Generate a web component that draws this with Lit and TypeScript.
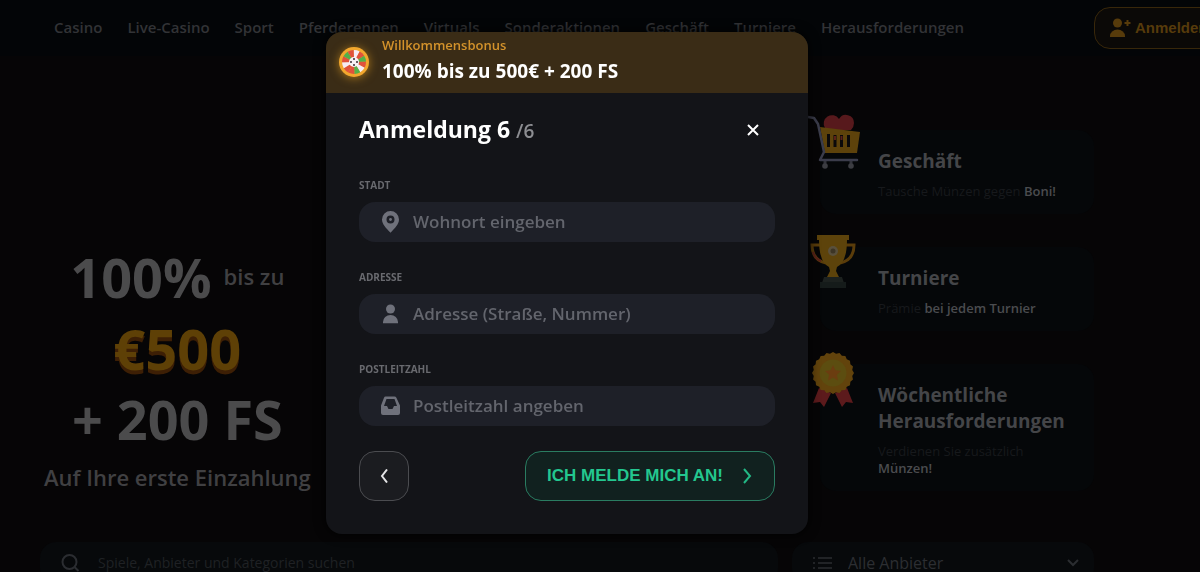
import { LitElement, html, css, svg } from "lit";
import { customElement } from "lit/decorators.js";

const NAV = ["Casino", "Live-Casino", "Sport", "Pferderennen", "Virtuals", "Sonderaktionen", "Geschäft", "Turniere", "Herausforderungen"];

const cart = html`<svg width="54" height="58" viewBox="2 5 54 58" overflow="visible" aria-hidden="true">
  <path d="M17 16a8 8 0 0 1 14-9 8 8 0 0 1 15 4q0 4-3 7H19z" fill="#57191c"/>
  <path d="M12 15l40 5-3 21H17z" fill="#5d420b"/>
  <path d="M20.500 22v13M27 23v12M33.500 23v12M40.500 23v12" stroke="#0b090a" stroke-width="3"/>
  <path d="M27 24v4M33.500 24v4" stroke="#5a201a" stroke-width="2"/>
  <path d="M0 5l6 1 4 6 6 28-4 8h37" fill="none" stroke="#3b3c4b" stroke-width="2.500" stroke-linecap="round" stroke-linejoin="round"/>
  <path d="M17 49v4M43 49v4" stroke="#33343c" stroke-width="3"/>
  <circle cx="17" cy="54" r="2.800" fill="#3c3d42"/><circle cx="43" cy="54" r="2.800" fill="#3c3d42"/>
</svg>`;

const cup = html`<svg width="46" height="56" viewBox="0 0 46 56" aria-hidden="true">
  <path d="M10 11H2q0 15 14 18M36 11h8q0 15-14 18" fill="none" stroke="#5a3c0a" stroke-width="3"/>
  <path d="M3 18q2 7 8 9" fill="none" stroke="#5a201a" stroke-width="2"/>
  <path d="M7 1h32v5h-2q0 22-10 27l-1 4 3 6H17l3-6-1-4Q9 28 9 6H7z" fill="#5d430b"/>
  <circle cx="23" cy="17" r="5" fill="#59503c"/><circle cx="23" cy="17" r="2.500" fill="#3d3525"/>
  <path d="M14 43h18l2 6H12z" fill="#1c211f"/><path d="M10 48h26v6H10z" fill="#151b1a"/>
</svg>`;

const points = Array.from({ length: 40 }, (_, i) => {
  const r = i % 2 ? 19.5 : 21;
  const a = (i * Math.PI) / 20;
  return `${(22 + r * Math.cos(a)).toFixed(2)},${(21 + r * Math.sin(a)).toFixed(2)}`;
}).join(" ");

const rosette = html`<svg width="44" height="56" viewBox="-1 -1 44 56" aria-hidden="true">
  <path d="M8 36L2 51l7-1 4 5 7-14zM36 36l6 15-7-1-4 5-7-14z" fill="#5c1a1c"/>
  <polygon points=${points} fill="#62430c"/>
  <circle cx="22" cy="21" r="13.500" fill="#5c4d10"/>
  <path d="M22 13l2.400 5.200 5.600.7-4.100 3.900 1.100 5.600-5-2.800-5 2.800 1.100-5.600-4.100-3.900 5.600-.7z" fill="#6b3d10"/>
</svg>`;

const wheelColors = ["#f6ecf5", "#e0523c", "#53b04a", "#e0523c", "#f6ecf5", "#53b04a", "#e0523c", "#e0523c", "#f6ecf5", "#e0523c", "#53b04a", "#e0523c"];
const wheel = html`<svg class="wheel" width="32" height="32" viewBox="0 0 32 32" aria-hidden="true">
  <circle cx="16" cy="15" r="15" fill="#f2a72e"/>
  ${wheelColors.map((c, i) => {
    const p = (a: number) => `${(16 + 12 * Math.cos(a)).toFixed(2)} ${(15 + 12 * Math.sin(a)).toFixed(2)}`;
    const s = (i * Math.PI) / 6 - 1.6;
    return svg`<path d="M16 15L${p(s)}A12 12 0 0 1 ${p(s + Math.PI / 6)}z" fill=${c}/>`;
  })}
  <circle cx="16" cy="15" r="5" fill="#f7f1f4"/>
  <path d="M16 11v2M16 17v2M12 15h2M18 15h2" stroke="#3b2c33" stroke-width="1.500"/>
</svg>`;

const pin = html`<svg width="20" height="22" viewBox="0 0 20 22" aria-hidden="true"><path fill="currentColor" fill-rule="evenodd" d="M10.500 0a8.500 8.500 0 0 0-8.500 8.500C2 13 6 17 10.500 21.800 15 17 19 13 19 8.500A8.500 8.500 0 0 0 10.500 0zm0 4.500a4 4 0 1 1 0 8 4 4 0 0 1 0-8z"/><circle cx="10.500" cy="8.500" r="1.400" fill="currentColor"/></svg>`;
const person = html`<svg width="20" height="20" viewBox="0 0 20 20" aria-hidden="true"><circle cx="10.500" cy="5" r="4.500" fill="currentColor"/><path d="M3 19.200v-1.200a7 6.500 0 0 1 15 0v1.200z" fill="currentColor"/></svg>`;
const inbox = html`<svg width="20" height="20" viewBox="0 0 20 20" aria-hidden="true"><path fill="currentColor" fill-rule="evenodd" d="M5.500.5h9q1.300 0 1.900 1.300L20 9.500V17q0 2-2 2H3q-2 0-2-2V9.500l3-7.700Q4.500.5 5.500.5zM6.500 3L4 10h3l1.500 3h4L14 10h3l-2.500-7z"/></svg>`;

const FIELDS = [
  { id: "city", label: "STADT", hint: "Wohnort eingeben", icon: pin },
  { id: "address", label: "ADRESSE", hint: "Adresse (Straße, Nummer)", icon: person },
  { id: "zip", label: "POSTLEITZAHL", hint: "Postleitzahl angeben", icon: inbox },
];

@customElement("signup-dialog")
class SignupDialog extends LitElement {
  static styles = css`
    :host { display: block; width: 100%; max-width: 482px; }
    * { box-sizing: border-box; }
    .dialog { border-radius: 16px; overflow: hidden; background: #131418; color: #fff; box-shadow: 0 0 12px #000; }
    .offer { display: flex; align-items: center; gap: 12px; min-height: 61px; padding: 0 12px; background: #3a2c16; }
    .wheel { flex: none; filter: drop-shadow(0 1px 5px #a8761d); }
    .offer-text { display: grid; gap: 5px; padding-bottom: 3px; }
    .offer-name { font-size: 13px; line-height: 14px; font-weight: 600; color: #d3922b; }
    .offer-value { font-size: 19px; line-height: 28px; font-weight: 700; }
    .body { padding: 20px 33px 33px; }
    .head { display: flex; align-items: center; justify-content: space-between; margin-bottom: 31px; }
    h2 { margin: 0; font-size: 23px; line-height: 32px; font-weight: 700; }
    .total { font-size: 19px; font-weight: 600; color: #8c8d91; }
    button { font: inherit; color: inherit; cursor: pointer; }
    .close { display: grid; place-items: center; width: 44px; height: 32px; padding: 0; border: 0; background: none; }
    .fields { display: grid; gap: 28px; }
    .row { display: grid; gap: 10px; }
    label { font-size: 10px; line-height: 14px; font-weight: 700; color: #696a6f; }
    .field { display: flex; align-items: center; gap: 13px; height: 40px; padding: 0 21px; border-radius: 16px; background: #1e2028; color: #6f717b; }
    .field svg { flex: none; }
    input { flex: 1; min-width: 0; padding: 0; border: 0; outline: 0; background: none; color: #fff; font: 600 17px/24px "Open Sans", sans-serif; }
    input::placeholder { color: #63656d; opacity: 1; }
    .actions { display: flex; justify-content: space-between; margin-top: 25px; }
    .back, .submit { display: flex; align-items: center; height: 50px; border-radius: 16px; }
    .back { justify-content: center; width: 50px; padding: 0; border: 1px solid #4b4c50; background: #1b1c20; }
    .submit { gap: 20px; padding: 0 22px 0 21px; border: 1px solid #2a7c61; background: #11211f; color: #23c78f; font: 700 17px/24px "Liberation Sans", sans-serif; white-space: nowrap; }
  `;

  render() {
    return html`<section class="dialog" role="dialog" aria-modal="true" aria-labelledby="title">
      <div class="offer">
        ${wheel}
        <div class="offer-text">
          <span class="offer-name">Willkommensbonus</span>
          <span class="offer-value">100% bis zu 500€ + 200 FS</span>
        </div>
      </div>
      <form class="body" @submit=${(e: Event) => e.preventDefault()}>
        <div class="head">
          <h2 id="title">Anmeldung 6 <span class="total">/6</span></h2>
          <button class="close" type="button" aria-label="Schließen">
            <svg width="12" height="12" viewBox="0 0 12 12"><path d="M1 1l10 10M11 1L1 11" stroke="#fff" stroke-width="2"/></svg>
          </button>
        </div>
        <div class="fields">
          ${FIELDS.map((f) => html`<div class="row">
            <label for=${f.id}>${f.label}</label>
            <div class="field">${f.icon}<input id=${f.id} type="text" placeholder=${f.hint} /></div>
          </div>`)}
        </div>
        <div class="actions">
          <button class="back" type="button" aria-label="Zurück">
            <svg width="8" height="14" viewBox="0 0 8 14"><path d="M7 .5L2 7l5 6.500" fill="none" stroke="#e4e4e6" stroke-width="2"/></svg>
          </button>
          <button class="submit" type="submit">ICH MELDE MICH AN!
            <svg width="9" height="16" viewBox="0 0 9 16"><path d="M1 1l6 7-6 7" fill="none" stroke="#23b885" stroke-width="2"/></svg>
          </button>
        </div>
      </form>
    </section>`;
  }
}

@customElement("app-root")
class AppRoot extends LitElement {
  static styles = css`
    :host { display: block; height: 100vh; overflow: hidden; background: #060506; color: #48494c; font-family: "Open Sans", "Noto Sans", sans-serif; }
    * { box-sizing: border-box; }
    a { color: inherit; text-decoration: none; }
    .top { display: flex; align-items: center; height: 56px; background: #030507; }
    nav { display: flex; flex: 1; gap: 25px; padding: 0 0 2px 54px; font-size: 15px; line-height: 20px; font-weight: 600; color: #323336; white-space: nowrap; }
    .account { flex: none; width: 106px; }
    .join { display: flex; align-items: center; gap: 4px; width: 126px; height: 42px; padding: 0 14px; border: 1px solid #38270a; border-radius: 16px; background: #0b0907; color: #573b0b; font: 700 15px/20px "Liberation Sans", sans-serif; }
    .join svg { flex: none; }
    main { display: grid; grid-template-columns: 1fr 302px; column-gap: 14px; padding: 0 106px 0 40px; }
    .hero { display: grid; align-content: start; justify-self: start; justify-items: center; padding: 186px 0 0 4px; white-space: nowrap; }
    .big { font-size: 54px; line-height: 71px; font-weight: 700; color: #4b4b4c; }
    .first { display: flex; align-items: center; gap: 12px; }
    .first .small { padding-bottom: 4px; }
    .gold { font-size: 56px; color: #5e4006; text-shadow: 0 4px 0 #3d1f05; }
    .small { font-size: 22px; line-height: 30px; font-weight: 600; color: #404042; }
    .last { padding-top: 7px; }
    .promos { display: grid; align-content: start; gap: 33px; padding: 74px 0 51px 28px; }
    .promo { display: grid; grid-template-columns: 58px 1fr; min-height: 84px; padding: 0 24px 14px 0; border-radius: 16px; background: #050709; }
    .art { position: relative; top: -13px; left: -10px; }
    .promo h3 { margin: 18px 0 9px; font-size: 19px; line-height: 26px; font-weight: 700; color: #444548; }
    .promo p { margin: 0; font-size: 13px; line-height: 17px; color: #17191c; }
    .promo b { font-weight: 600; color: #4b4c4f; }
    .bar { display: flex; align-items: center; height: 42px; border-radius: 16px; background: #07090b; color: #2b2d31; }
    .bar svg { flex: none; }
    .search { gap: 18px; padding: 0 20px; }
    .search input { flex: 1; min-width: 0; padding: 0; border: 0; outline: 0; background: none; color: #48494c; font: 400 14px/20px "Open Sans", sans-serif; }
    .search input::placeholder { color: #1f2124; opacity: 1; }
    .filter { gap: 16px; padding: 0 15px 0 20px; }
    .filter select { flex: 1; padding: 0; border: 0; outline: 0; appearance: none; background: none; color: #2c2e32; font: 400 16px/22px "Open Sans", sans-serif; }
    .overlay { position: fixed; inset: 0; display: flex; justify-content: center; align-items: flex-start; padding: 32px 66px 0 0; overflow: hidden; }
  `;

  promo(art: unknown, title: string, text: string, strong: string) {
    return html`<a class="promo" href="#">
      <div class="art">${art}</div>
      <div><h3>${title}</h3><p>${text} <b>${strong}</b></p></div>
    </a>`;
  }

  render() {
    return html`
      <header class="top">
        <nav>${NAV.map((n) => html`<a href="#">${n}</a>`)}</nav>
        <div class="account">
          <button class="join">
            <svg width="22" height="20" viewBox="0 0 22 20" aria-hidden="true"><circle cx="8.500" cy="5" r="4.500" fill="currentColor"/><path d="M1 19v-1a7.500 6.500 0 0 1 15 0v1z" fill="currentColor"/><path d="M18.500 2v6M15.500 5h6" stroke="currentColor" stroke-width="2"/></svg>
            Anmelden
          </button>
        </div>
      </header>
      <main>
        <section class="hero">
          <div class="first"><span class="big">100%</span><span class="small">bis zu</span></div>
          <div class="big gold">€500</div>
          <div class="big">+ 200 FS</div>
          <div class="small last">Auf Ihre erste Einzahlung</div>
        </section>
        <aside class="promos">
          ${this.promo(cart, "Geschäft", "Tausche Münzen gegen", "Boni!")}
          ${this.promo(cup, "Turniere", "Prämie", "bei jedem Turnier")}
          ${this.promo(rosette, "Wöchentliche Herausforderungen", "Verdienen Sie zusätzlich", "Münzen!")}
        </aside>
        <div class="bar search">
          <svg width="20" height="20" viewBox="0 0 20 20" aria-hidden="true"><circle cx="9.500" cy="9" r="7" fill="none" stroke="currentColor" stroke-width="2"/><path d="M14.500 14l4 4" stroke="currentColor" stroke-width="2"/></svg>
          <input type="search" aria-label="Suche" placeholder="Spiele, Anbieter und Kategorien suchen" />
        </div>
        <div class="bar filter">
          <svg width="20" height="14" viewBox="0 0 20 14" aria-hidden="true"><path d="M6 2h14M6 7h14M6 12h14M1 2h2M1 7h2M1 12h2" stroke="currentColor" stroke-width="1.500"/></svg>
          <select aria-label="Anbieter"><option>Alle Anbieter</option></select>
          <svg width="12" height="8" viewBox="0 0 12 8" aria-hidden="true"><path d="M1 1l5 5 5-5" fill="none" stroke="currentColor" stroke-width="2"/></svg>
        </div>
      </main>
      <div class="overlay"><signup-dialog></signup-dialog></div>
    `;
  }
}
